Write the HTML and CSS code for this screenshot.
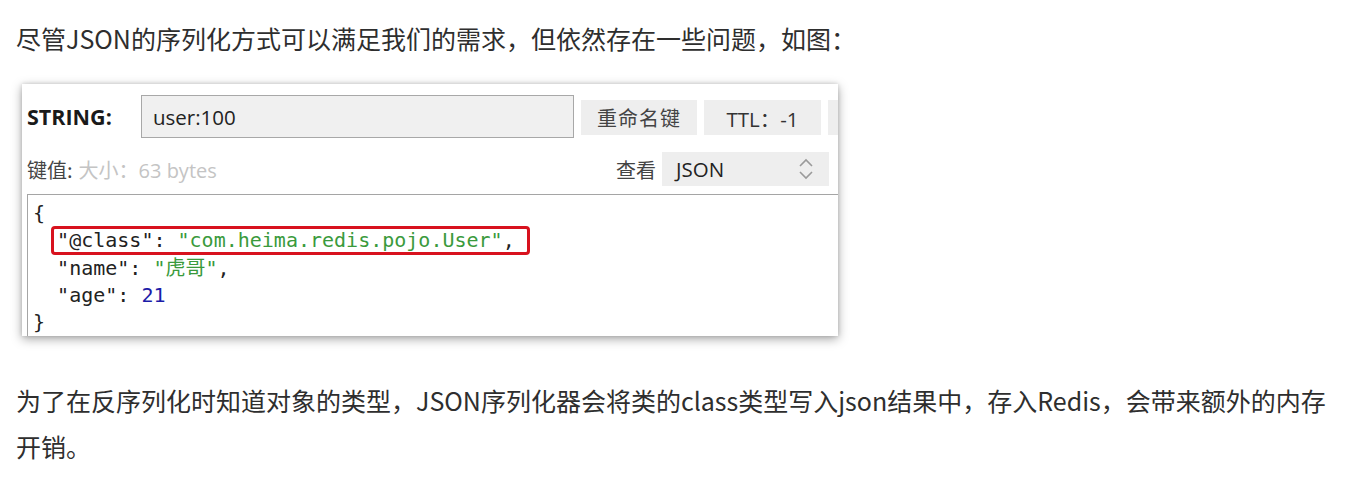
FILE: index.html
```html
<!DOCTYPE html>
<html lang="zh-CN">
<head>
<meta charset="utf-8">
<link rel="stylesheet" href="styles.css">
</head>
<body>
<div class="page">
  <p class="para first">尽管JSON的序列化方式可以满足我们的需求，但依然存在一些问题，如图：</p>
  <div class="card">
    <div class="inner">
      <div class="row1">
        <span class="type">STRING:</span>
        <div class="keyinput">user:100</div>
        <div class="btn rename">重命名键</div>
        <div class="btn ttl">TTL：-1</div>
        <div class="btn extra"></div>
      </div>
      <div class="row2">
        <div class="left"><span class="lbl">键值:</span><span class="size">大小：63 bytes</span></div>
        <div class="right">
          <span class="lbl view">查看</span>
          <div class="select"><span>JSON</span>
            <svg class="chev" width="16" height="22" viewBox="0 0 16 22"><path d="M2 8 L8 2 L14 8" fill="none" stroke="#9a9a9a" stroke-width="1.6"/><path d="M2 14 L8 20 L14 14" fill="none" stroke="#9a9a9a" stroke-width="1.6"/></svg>
          </div>
        </div>
      </div>
      <div class="code">
        <div class="ln">{</div>
        <div class="ln">  <span class="hl"><span class="k">"@class"</span>: <span class="s">"com.heima.redis.pojo.User"</span></span>,</div>
        <div class="ln">  <span class="k">"name"</span>: <span class="s">"虎哥"</span>,</div>
        <div class="ln">  <span class="k">"age"</span>: <span class="n">21</span></div>
        <div class="ln">}</div>
      </div>
    </div>
  </div>
  <p class="para second">为了在反序列化时知道对象的类型，JSON序列化器会将类的class类型写入json结果中，存入Redis，会带来额外的内存开销。</p>
</div>
</body>
</html>
```

FILE: styles.css
```css
* { box-sizing: border-box; }
html, body { margin: 0; padding: 0; background: #ffffff; }
body {
  font-family: "Noto Sans CJK SC", "Noto Sans", sans-serif;
  color: #2e2e2e;
}
.page {
  padding: 15px 0 0 16px;
  width: 1340px;
}
.para {
  margin: 0;
  font-size: 25px;
  line-height: 46px;
}
.second { margin-top: 41px; width: 1318px; }

.card {
  margin: 23px 0 0 6px;
  width: 816px;
  height: 252px;
  background: #fff;
  overflow: hidden;
  box-shadow: 0 3px 10px rgba(0,0,0,0.35), 0 0 4px rgba(0,0,0,0.15);
}
.inner {
  width: 840px;
  height: 100%;
  display: flex;
  flex-direction: column;
}
.row1 {
  display: flex;
  align-items: center;
  margin-top: 11px;
  height: 43px;
}
.type {
  font-family: "Open Sans", "Liberation Sans", sans-serif;
  font-weight: 700;
  font-size: 21.5px;
  color: #1a1a1a;
  width: 119px;
  padding-left: 5px;
}
.keyinput {
  width: 433px;
  height: 43px;
  background: #f0f0f0;
  border: 1px solid #a8a8a8;
  font-family: "Open Sans", "Liberation Sans", sans-serif;
  font-size: 20.5px;
  color: #222;
  padding-left: 11px;
  display: flex;
  align-items: center;
}
.btn {
  height: 35px;
  background: #eeeeee;
  margin-left: 7px;
  display: flex;
  align-items: center;
  justify-content: center;
  font-size: 20px;
  color: #333;
  margin-top: 2px;
}
.rename { width: 116px; color: #444; letter-spacing: 1px; }
.ttl { width: 117px; font-family: "Open Sans", "Noto Sans CJK SC", sans-serif; font-size: 20.5px; }
.extra { width: 30px; }

.row2 {
  display: flex;
  justify-content: space-between;
  align-items: center;
  margin-top: 14px;
  height: 34px;
  width: 816px;
  padding-right: 9px;
}
.left { padding-left: 5px; display: flex; align-items: center; }
.lbl { font-size: 20px; color: #444; }
.size {
  font-family: "Open Sans", "Noto Sans CJK SC", sans-serif;
  font-size: 20px;
  color: #c4c4c4;
  margin-left: 6px;
}
.right { display: flex; align-items: center; }
.view { margin-right: 6px; }
.select {
  width: 167px;
  height: 34px;
  background: #eeeeee;
  display: flex;
  align-items: center;
  justify-content: space-between;
  padding: 0 15px 0 14px;
  font-family: "Open Sans", "Liberation Sans", sans-serif;
  font-size: 20.5px;
  color: #222;
}
.chev { display: block; }

.code {
  margin-top: 8px;
  margin-left: 5px;
  flex: 1;
  border-top: 1px solid #a5a5a5;
  border-left: 1px solid #a5a5a5;
  padding: 5px 0 0 5px;
  font-family: "DejaVu Sans Mono", "Liberation Mono", "Noto Sans CJK SC", monospace;
  font-size: 20px;
  line-height: 27.3px;
  color: #222;
}
.ln { height: 27.3px; white-space: pre; }
.k { color: #222; }
.s { color: #3a9a3c; }
.n { color: #1c1ca8; }
.hl { position: relative; }
.hl::after {
  content: "";
  position: absolute;
  left: -6px;
  right: -27px;
  top: -2px;
  bottom: -3px;
  border: 3px solid #d8121e;
  border-radius: 4px;
}
```
